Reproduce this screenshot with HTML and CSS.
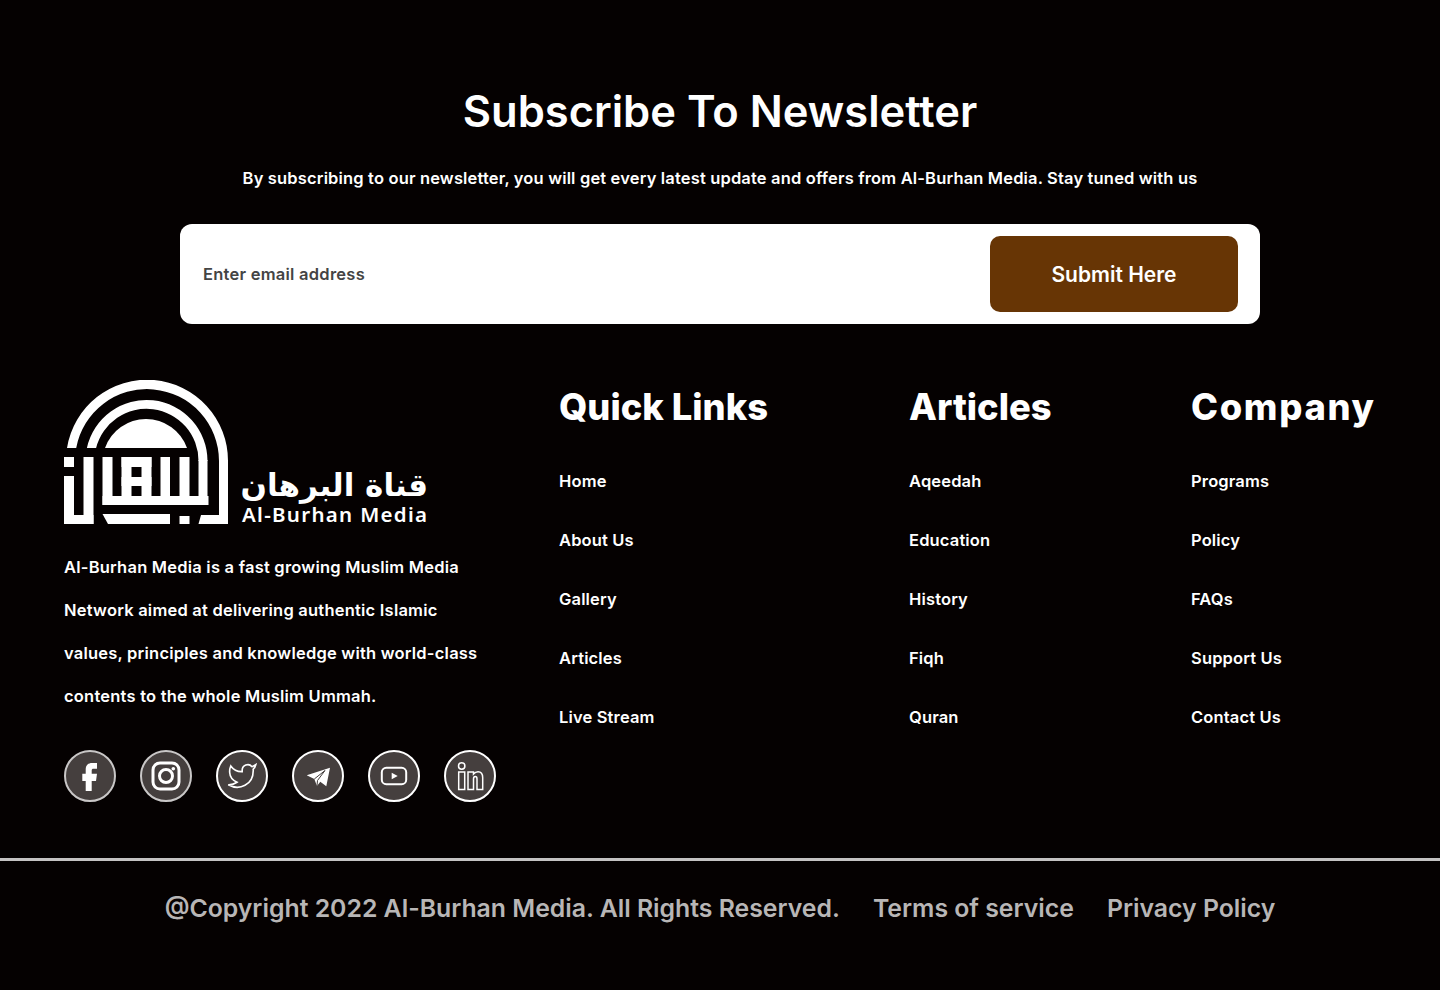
FILE: index.html
```html
<!DOCTYPE html>
<html lang="en">
<head>
    <meta charset="UTF-8">
    <meta name="viewport" content="width=device-width, initial-scale=1.0">
    <title>Al-Burhan Media</title>
    <link rel="stylesheet" href="styles.css">
</head>
<body>

    <section class="newsletter">
        <h2>Subscribe To Newsletter</h2>
        <p>By subscribing to our newsletter, you will get every latest update and offers from Al-Burhan Media. Stay tuned with us</p>
        <form class="subscribe-form">
            <input type="email" placeholder="Enter email address">
            <button type="button">Submit Here</button>
        </form>
    </section>

    <footer>
        <div class="footer-main">
            <div class="about">
                <svg class="logo" viewBox="64 380 370 152" width="370" height="152" role="img" aria-label="Al-Burhan Media">
                    <g class="solid">
                        <!-- arches -->
                        <path d="M67 448 A81 81 0 0 1 228 461 H219 A72 72 0 0 0 76.200 448 Z"/>
                        <path d="M86.900 448 A61 61 0 0 1 207.500 461 H198.500 A52 52 0 0 0 96.100 448 Z"/>
                        <path d="M105 448 A43.500 43.500 0 0 1 187 448 Z"/>
                        <!-- kufic mark -->
                        <rect x="64" y="457" width="10" height="10"/>
                        <rect x="64" y="476" width="10" height="48"/>
                        <rect x="64" y="515" width="29.500" height="9"/>
                        <rect x="83.500" y="457" width="10" height="67"/>
                        <rect x="102.500" y="457" width="10" height="48"/>
                        <rect x="102.500" y="496" width="106" height="9"/>
                        <rect x="121.500" y="457" width="30" height="10"/>
                        <rect x="121.500" y="477" width="30" height="9"/>
                        <rect x="121.500" y="457" width="10" height="48"/>
                        <rect x="141.500" y="457" width="10" height="48"/>
                        <rect x="160.500" y="457" width="9.500" height="48"/>
                        <rect x="179.500" y="457" width="10" height="48"/>
                        <rect x="198.500" y="460" width="9" height="45"/>
                        <path d="M102.500 514 H170 V524 H108 Z"/>
                        <rect x="179.500" y="516" width="10" height="8"/>
                        <path d="M201 515 H228 V524 H198.500 Z"/>
                        <rect x="219" y="460" width="9" height="64"/>
                    </g>
                    <text class="logo-ar" x="428" y="496" text-anchor="start" direction="rtl">قناة البرهان</text>
                    <text class="logo-en" x="242" y="522" textLength="185">Al-Burhan Media</text>
                </svg>
                <p>Al-Burhan Media is a fast growing Muslim Media<br>Network aimed at delivering authentic Islamic<br>values, principles and knowledge with world-class<br>contents to the whole Muslim Ummah.</p>
                <div class="socials">
                    <a href="#" class="social dim"><svg viewBox="0 0 52 52"><path class="solid" d="M21.700 41 V31 H18.300 V23.700 H21.700 V19.500 C21.700 15 24.500 13 28 13 H33 V18.700 H29.500 C28.200 18.700 27.700 19.300 27.700 20.500 V23.700 H33 L32 31 H27.700 V41 Z"/></svg></a>
                    <a href="#" class="social dim"><svg viewBox="0 0 52 52"><rect class="line" x="13" y="13" width="26" height="26" rx="7" stroke-width="3"/><circle class="line" cx="26" cy="26" r="6.500" stroke-width="3"/><circle class="solid" cx="33.300" cy="18.800" r="1.800"/></svg></a>
                    <a href="#" class="social"><svg viewBox="0 0 52 52"><g transform="translate(11 11) scale(1.250)"><path class="line" stroke-width="1.300" d="M23 3a10.900 10.900 0 0 1-3 1.530 4.480 4.480 0 0 0-7.860 3v1A10.660 10.660 0 0 1 3 4s-4 9 5 13a11.640 11.640 0 0 1-7 2c9 5 20 0 20-11.500a4.500 4.500 0 0 0-.080-.830A7.720 7.720 0 0 0 23 3z"/></g></svg></a>
                    <a href="#" class="social"><svg viewBox="0 0 52 52"><path class="solid" d="M38 17.700 L14.700 25.300 L22.300 29 L25 36 L28.300 31.700 L34.300 36.300 Z"/><path class="cut" d="M22.300 29 L33 20.500 L25.500 30.500 L25 36"/></svg></a>
                    <a href="#" class="social"><svg viewBox="0 0 52 52"><rect class="line" x="13.800" y="17.800" width="24.400" height="16.400" rx="4.500" stroke-width="2"/><path class="solid" d="M23.700 22.700 L29.700 26 L23.700 29.300 Z"/></svg></a>
                    <a href="#" class="social"><svg viewBox="0 0 52 52"><circle class="line" cx="17.700" cy="16" r="3.200" stroke-width="1.500"/><rect class="line" x="14.700" y="22" width="6" height="17.500" stroke-width="1.500"/><path class="line" stroke-width="1.500" d="M24 22 H29.500 V24 C31 22.200 32.500 21.700 34 21.700 C37.200 21.700 38.700 24 38.700 27.700 V39.500 H33 V29 C33 27.500 32.500 26.500 31.300 26.500 C30 26.500 29.500 27.500 29.500 29 V39.500 H24 Z"/></svg></a>
                </div>
            </div>

            <div class="link-col">
                <h3>Quick Links</h3>
                <ul>
                    <li><a href="#">Home</a></li>
                    <li><a href="#">About Us</a></li>
                    <li><a href="#">Gallery</a></li>
                    <li><a href="#">Articles</a></li>
                    <li><a href="#">Live Stream</a></li>
                </ul>
            </div>

            <div class="link-col">
                <h3>Articles</h3>
                <ul>
                    <li><a href="#">Aqeedah</a></li>
                    <li><a href="#">Education</a></li>
                    <li><a href="#">History</a></li>
                    <li><a href="#">Fiqh</a></li>
                    <li><a href="#">Quran</a></li>
                </ul>
            </div>

            <div class="link-col company">
                <h3>Company</h3>
                <ul>
                    <li><a href="#">Programs</a></li>
                    <li><a href="#">Policy</a></li>
                    <li><a href="#">FAQs</a></li>
                    <li><a href="#">Support Us</a></li>
                    <li><a href="#">Contact Us</a></li>
                </ul>
            </div>
        </div>

        <div class="copyright">
            <span>@Copyright 2022 Al-Burhan Media. All Rights Reserved.</span>
            <a href="#">Terms of service</a>
            <a href="#">Privacy Policy</a>
        </div>
    </footer>

</body>
</html>
```

FILE: styles.css
```css
body {
    font-family: 'Inter', 'Open Sans', sans-serif;
    margin: 0;
    padding: 0;
    color: #fff;
    background-color: #050101;
}

a {
    color: inherit;
    text-decoration: none;
}

.newsletter {
    padding: 84px 180px 0;
    text-align: center;
}

.newsletter h2 {
    font-size: 43.500px;
    line-height: 54px;
    font-weight: 600;
    margin: 0;
}

.newsletter p {
    font-size: 16.500px;
    letter-spacing: .16px;
    line-height: 24px;
    font-weight: 600;
    margin: 28px 0 0;
}

.subscribe-form {
    display: flex;
    align-items: center;
    justify-content: space-between;
    height: 100px;
    margin-top: 34px;
    padding: 0 22px 0 23px;
    background: #fff;
    border-radius: 12px;
}

.subscribe-form input {
    flex: 1;
    border: 0;
    outline: 0;
    padding: 0;
    font-family: inherit;
    font-size: 16.500px;
    letter-spacing: .25px;
    font-weight: 600;
    color: #444;
}

.subscribe-form input::placeholder {
    color: #444;
    opacity: 1;
}

.subscribe-form button {
    width: 248px;
    height: 76px;
    border: 0;
    border-radius: 10px;
    background: #673505;
    color: #fff;
    font-family: inherit;
    font-size: 21px;
    font-weight: 600;
}

.footer-main {
    display: grid;
    grid-template-columns: 495px 350px 282px 1fr;
    padding: 56px 0 56px 64px;
}

.logo {
    display: block;
}

.solid {
    fill: #fff;
}

.logo-ar {
    font-family: 'DejaVu Sans', sans-serif;
    font-size: 31px;
    font-weight: 700;
    fill: #fff;
}

.logo-en {
    font-family: 'Noto Sans', sans-serif;
    font-size: 20.500px;
    font-weight: 600;
    fill: #fff;
}

.about p {
    font-size: 16.500px;
    letter-spacing: .22px;
    line-height: 43px;
    font-weight: 600;
    margin: 14px 0 0;
    white-space: nowrap;
}

.socials {
    display: flex;
    gap: 24px;
    margin-top: 32px;
}

.social {
    box-sizing: border-box;
    width: 52px;
    height: 52px;
    border: 2px solid #fff;
    border-radius: 50%;
    background: #453f3e;
    overflow: hidden;
}

.social.dim {
    border-color: #c9c7c7;
}

.social svg {
    display: block;
    width: 52px;
    height: 52px;
    margin: -2px;
}

.line {
    fill: none;
    stroke: #fff;
}

.cut {
    fill: none;
    stroke: #453f3e;
    stroke-width: 1;
}

.link-col h3 {
    font-size: 36.300px;
    line-height: 54px;
    font-weight: 800;
    margin: 0;
}

.company h3 {
    letter-spacing: 1.700px;
}

.link-col ul {
    list-style: none;
    margin: 35px 0 0;
    padding: 0;
}

.link-col li {
    font-size: 16.500px;
    letter-spacing: .15px;
    line-height: 24px;
    font-weight: 600;
    margin-bottom: 35px;
}

.copyright {
    display: flex;
    justify-content: center;
    gap: 33px;
    border-top: 3px solid #c4c2c2;
    padding-top: 29px;
    height: 100px;
    box-sizing: border-box;
    font-size: 24.800px;
    line-height: 36px;
    font-weight: 600;
    color: #b8b6b6;
}
```
